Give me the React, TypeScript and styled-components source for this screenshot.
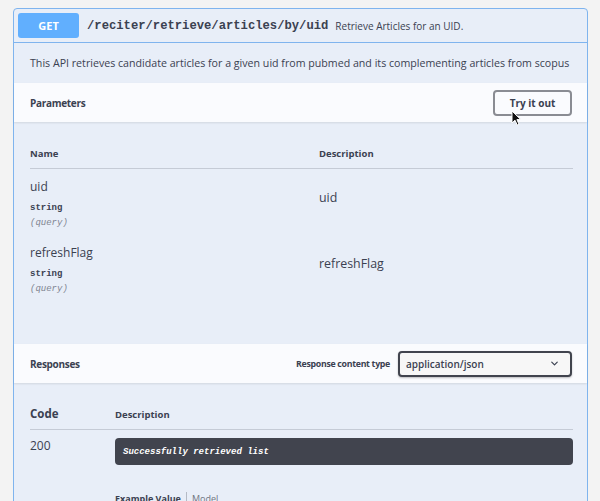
import styled, { createGlobalStyle } from 'styled-components';
import { ChevronDown } from 'lucide-react';

const GlobalStyle = createGlobalStyle`
  html, body {
    margin: 0;
    background: #f3f3f3;
    overflow: hidden;
  }
  body {
    font-family: 'Open Sans', 'Liberation Sans', sans-serif;
    color: #3b4151;
  }
`;

const params = [
  { name: 'uid', type: 'string', place: '(query)' },
  { name: 'refreshFlag', type: 'string', place: '(query)' },
];

function Cursor() {
  return (
    <CursorMark width='11' height='16' viewBox='0 0 11 16'>
      <path d='M1 1 L1 13 L4 10.2 L6.2 15 L8 14.2 L5.9 9.6 L9.8 9.6 Z' fill='#111' stroke='#fff' strokeWidth='1' strokeLinejoin='round' />
    </CursorMark>
  );
}

function App() {
  return (
    <>
      <GlobalStyle />
      <Page>
        <OpBlock>
          <Summary>
            <MethodBadge>GET</MethodBadge>
            <PathText>/reciter/retrieve/articles/by/uid</PathText>
            <SummaryText>Retrieve Articles for an UID.</SummaryText>
          </Summary>

          <Description>
            This API retrieves candidate articles for a given uid from pubmed and its complementing articles from scopus
          </Description>

          <SectionHeader>
            <SectionTitle>Parameters</SectionTitle>
            <TryButton>
              Try it out
              <Cursor />
            </TryButton>
          </SectionHeader>

          <ParamTable>
            <HeadCell>Name</HeadCell>
            <HeadCell>Description</HeadCell>
            {params.map((p) => (
              <ParamRow key={p.name}>
                <NameCell>
                  <ParamName>{p.name}</ParamName>
                  <ParamType>{p.type}</ParamType>
                  <ParamIn>{p.place}</ParamIn>
                </NameCell>
                <DescCell>{p.name}</DescCell>
              </ParamRow>
            ))}
          </ParamTable>

          <SectionHeader>
            <SectionTitle>Responses</SectionTitle>
            <ContentType>
              <ContentLabel>Response content type</ContentLabel>
              <SelectBox>
                application/json
                <ChevronDown size={11} strokeWidth={2.6} />
              </SelectBox>
            </ContentType>
          </SectionHeader>

          <ResponseTable>
            <CodeHead>Code</CodeHead>
            <HeadCell>Description</HeadCell>
            <CodeCell>200</CodeCell>
            <div>
              <DarkBox>Successfully retrieved list</DarkBox>
              <ExampleTabs>
                <TabLink active>Example Value</TabLink>
                <TabLink>Model</TabLink>
              </ExampleTabs>
            </div>
          </ResponseTable>
        </OpBlock>
      </Page>
    </>
  );
}

const Page = styled.div`
  height: 501px;
  padding: 8px 12px 0 13px;
  box-sizing: border-box;
  overflow: hidden;
`;

const OpBlock = styled.div`
  border: 1px solid #7fb4ee;
  border-radius: 4px;
  background: #e8eef8;
  min-height: 600px;
`;

const Summary = styled.div`
  display: flex;
  align-items: center;
  padding: 4px;
  border-bottom: 1px solid #7fb4ee;
`;

const MethodBadge = styled.div`
  width: 61px;
  height: 25px;
  border-radius: 3px;
  background: #61affe;
  color: #fff;
  font-size: 11px;
  font-weight: 700;
  display: flex;
  align-items: center;
  justify-content: center;
`;

const PathText = styled.span`
  margin-left: 8px;
  font-family: 'Liberation Mono', 'DejaVu Sans Mono', monospace;
  font-size: 12.2px;
  font-weight: 700;
  color: #3b4151;
`;

const SummaryText = styled.span`
  margin-left: 7px;
  font-size: 10px;
  color: #3b4151;
`;

const Description = styled.div`
  height: 40px;
  padding: 0 16px;
  display: flex;
  align-items: center;
  font-size: 10.65px;
  white-space: nowrap;
`;

const SectionHeader = styled.div`
  height: 39px;
  padding: 0 15px 0 16px;
  display: flex;
  align-items: center;
  justify-content: space-between;
  background: rgba(255, 255, 255, 0.78);
  box-shadow: 0 1px 2px rgba(0, 0, 0, 0.1);
`;

const SectionTitle = styled.div`
  font-size: 10px;
  font-weight: 700;
  letter-spacing: -0.3px;
  color: #3b4151;
`;

const TryButton = styled.div`
  position: relative;
  width: 79px;
  height: 26px;
  box-sizing: border-box;
  border: 2px solid #8a8c93;
  border-radius: 4px;
  display: flex;
  align-items: center;
  justify-content: center;
  font-size: 10px;
  font-weight: 700;
  color: #3b4151;
`;

const CursorMark = styled.svg`
  position: absolute;
  left: 16px;
  top: 18px;
`;

const ParamTable = styled.div`
  display: grid;
  grid-template-columns: 289px 1fr;
  padding: 25px 14px 43px 16px;
`;

const HeadCell = styled.div`
  font-size: 9.5px;
  font-weight: 700;
  color: #3b4151;
  padding-bottom: 8px;
  border-bottom: 1px solid rgba(59, 65, 81, 0.2);
  display: flex;
  align-items: flex-end;
`;

const ParamRow = styled.div`
  display: contents;
`;

const NameCell = styled.div`
  display: flex;
  flex-direction: column;
  padding: 10px 0 5px;
`;

const ParamName = styled.div`
  font-size: 12px;
  line-height: 16px;
`;

const ParamType = styled.div`
  margin-top: 6px;
  font-family: 'Liberation Mono', 'DejaVu Sans Mono', monospace;
  font-size: 9px;
  font-weight: 700;
  line-height: 14px;
`;

const ParamIn = styled.div`
  margin-top: 1px;
  font-family: 'Liberation Mono', 'DejaVu Sans Mono', monospace;
  font-size: 9px;
  font-style: italic;
  line-height: 14px;
  color: #808592;
`;

const DescCell = styled.div`
  padding-top: 20px;
  font-size: 12.4px;
  line-height: 18px;
`;

const ContentType = styled.div`
  display: flex;
  align-items: center;
  gap: 8px;
`;

const ContentLabel = styled.span`
  font-size: 8.8px;
  font-weight: 700;
  letter-spacing: -0.3px;
`;

const SelectBox = styled.div`
  width: 174px;
  height: 26px;
  box-sizing: border-box;
  padding: 0 10px 0 6px;
  border: 2px solid #41444e;
  border-radius: 4px;
  background: #f7f7f7;
  box-shadow: 0 1px 2px rgba(0, 0, 0, 0.25);
  display: flex;
  align-items: center;
  justify-content: space-between;
  font-size: 10px;
  font-weight: 600;
  color: #3b4151;
`;

const ResponseTable = styled.div`
  display: grid;
  grid-template-columns: 85px 1fr;
  padding: 23px 14px 0 16px;
`;

const CodeHead = styled(HeadCell)`
  font-size: 11.5px;
`;

const CodeCell = styled.div`
  padding-top: 8px;
  font-size: 12px;
  line-height: 16px;
`;

const DarkBox = styled.div`
  margin-top: 8px;
  height: 27px;
  padding: 0 8px;
  border-radius: 4px;
  background: #41444e;
  display: flex;
  align-items: center;
  font-family: 'Liberation Mono', 'DejaVu Sans Mono', monospace;
  font-size: 9px;
  font-weight: 700;
  font-style: italic;
  color: #fff;
`;

const ExampleTabs = styled.div`
  display: flex;
  margin-top: 27px;
`;

const TabLink = styled.span<{ active?: boolean }>`
  font-size: 9px;
  font-weight: ${(p) => (p.active ? 700 : 400)};
  color: ${(p) => (p.active ? '#3b4151' : '#70757f')};
  padding: 0 5px;
  &:first-child {
    padding-left: 0;
    border-right: 1px solid rgba(59, 65, 81, 0.3);
  }
`;

export default App;
